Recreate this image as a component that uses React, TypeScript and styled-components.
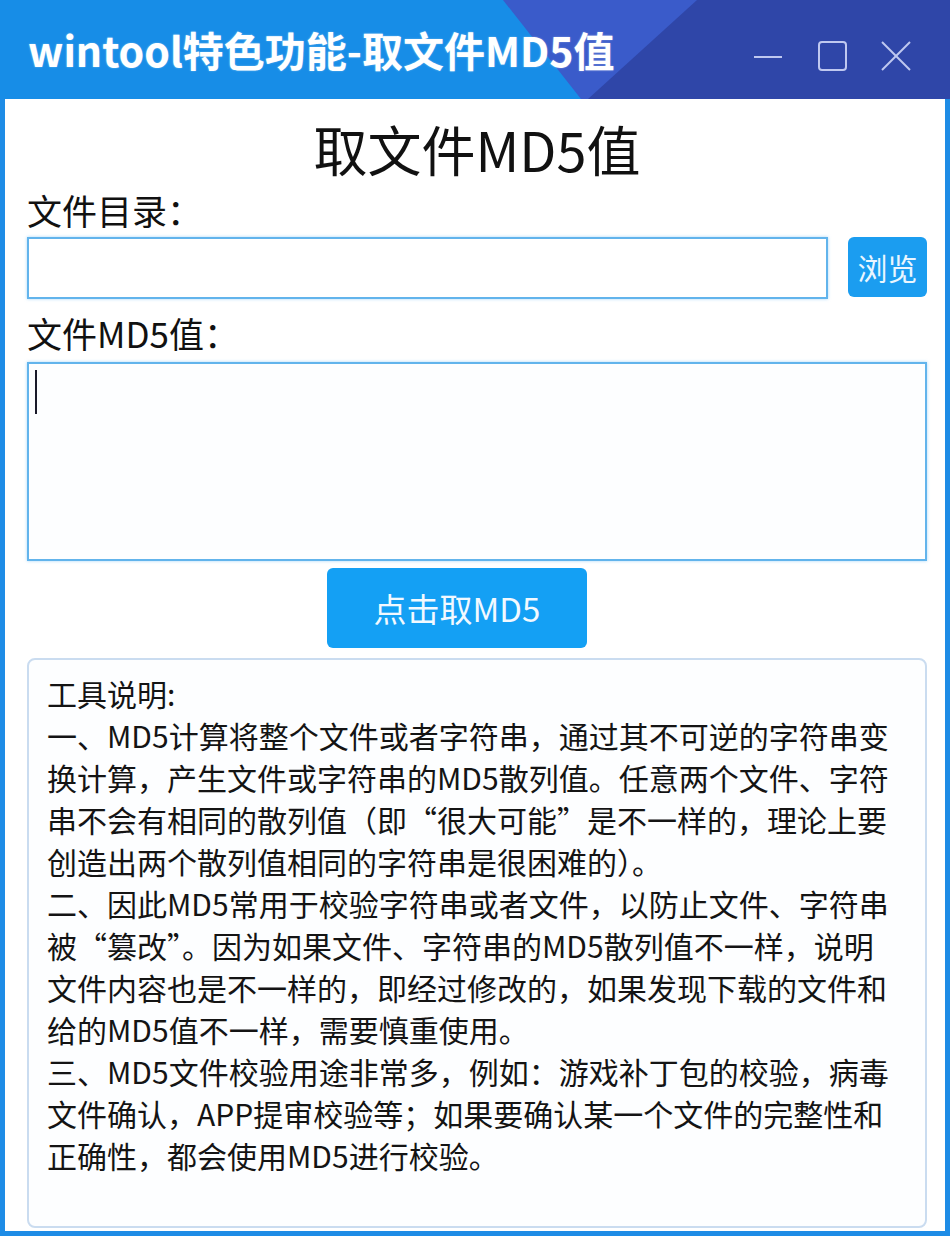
import React from "react";
import styled, { createGlobalStyle } from "styled-components";

const Global = createGlobalStyle`
  html, body { margin: 0; padding: 0; background: #ffffff; }
  body { font-family: "Noto Sans CJK SC", "Noto Sans", sans-serif; }
  * { box-sizing: border-box; }
`;

const FONT = `"Noto Sans CJK SC", "Noto Sans", sans-serif`;

const Window = styled.div`
  width: 950px;
  height: 1236px;
  display: flex;
  flex-direction: column;
  background: #1e8ce6;
  overflow: hidden;
`;

const TitleBar = styled.div`
  position: relative;
  height: 99px;
  flex: 0 0 auto;
  display: flex;
  align-items: center;
  justify-content: space-between;
  padding: 0 38px 0 28px;
  background: #178de7;
  &::before {
    content: "";
    position: absolute;
    inset: 0;
    background: #3a5bca;
    clip-path: polygon(503px 0, 100% 0, 100% 100%, 581px 100%);
  }
  &::after {
    content: "";
    position: absolute;
    inset: 0;
    background: #2f46a8;
    clip-path: polygon(697px 0, 100% 0, 100% 100%, 588px 100%);
  }
`;

const TitleText = styled.div`
  position: relative;
  z-index: 1;
  color: #ffffff;
  font-family: ${FONT};
  font-weight: 700;
  font-size: 41px;
  line-height: 1;
  margin-top: 0px;
  white-space: nowrap;
  text-shadow: 0 0 2px rgba(255, 255, 255, 0.4);
`;

const Controls = styled.div`
  position: relative;
  z-index: 1;
  display: flex;
  align-items: center;
  gap: 32px;
  margin-top: 12px;
`;

const ControlIcon = styled.svg`
  width: 32px;
  height: 32px;
  display: block;
  stroke: #bfc8f0;
  stroke-width: 2;
  fill: none;
`;

const Body = styled.div`
  flex: 1;
  margin: 0 5px 5px;
  background: #ffffff;
  display: flex;
  flex-direction: column;
  padding: 18px 18px 3px 22px;
`;

const Heading = styled.h1`
  margin: 0;
  text-align: center;
  font-family: ${FONT};
  font-weight: 400;
  font-size: 54px;
  line-height: 64px;
  color: #111111;
  padding-left: 0px;
`;

const Label = styled.div<{ $top: number }>`
  font-family: ${FONT};
  font-size: 35px;
  line-height: 40px;
  color: #111111;
  margin-top: ${(p) => p.$top}px;
  height: 40px;
`;

const InputRow = styled.div`
  display: flex;
  align-items: flex-start;
  gap: 20px;
  margin-top: 7px;
`;

const PathInput = styled.div`
  flex: 1;
  height: 62px;
  border: 2px solid #62b4ec;
  box-shadow: 0 0 3px rgba(110, 190, 245, 0.6);
  background: #ffffff;
`;

const BrowseButton = styled.button`
  width: 79px;
  height: 60px;
  border: none;
  border-radius: 6px;
  background: #1b9df0;
  color: #eaf6ff;
  font-family: ${FONT};
  font-size: 30px;
  line-height: 1;
  padding: 0;
  cursor: pointer;
`;

const OutputBox = styled.div`
  margin-top: 9px;
  height: 199px;
  border: 2px solid #62b4ec;
  box-shadow: 0 0 3px rgba(110, 190, 245, 0.6);
  background: #fdfeff;
  padding: 6px 0 0 6px;
`;

const Caret = styled.span`
  display: block;
  width: 2px;
  height: 44px;
  background: #1a1a2a;
`;

const ButtonRow = styled.div`
  display: flex;
  justify-content: center;
  margin-top: 7px;
  padding-right: 40px;
`;

const MainButton = styled.button`
  width: 260px;
  height: 80px;
  border: none;
  border-radius: 6px;
  background: #14a0f4;
  color: #f2f9ff;
  font-family: ${FONT};
  font-size: 33px;
  line-height: 1;
  padding: 0;
  cursor: pointer;
`;

const InfoBox = styled.div`
  margin-top: 10px;
  flex: 1;
  border: 2px solid #cadcf0;
  border-radius: 8px;
  background: #fdfeff;
  padding: 12px 0 0 18px;
`;

const InfoLine = styled.div`
  font-family: ${FONT};
  font-size: 30px;
  line-height: 42px;
  height: 42px;
  color: #141414;
  white-space: nowrap;
`;

const lines = [
  "工具说明:",
  "一、MD5计算将整个文件或者字符串，通过其不可逆的字符串变",
  "换计算，产生文件或字符串的MD5散列值。任意两个文件、字符",
  "串不会有相同的散列值（即“很大可能”是不一样的，理论上要",
  "创造出两个散列值相同的字符串是很困难的）。",
  "二、因此MD5常用于校验字符串或者文件，以防止文件、字符串",
  "被“篡改”。因为如果文件、字符串的MD5散列值不一样，说明",
  "文件内容也是不一样的，即经过修改的，如果发现下载的文件和",
  "给的MD5值不一样，需要慎重使用。",
  "三、MD5文件校验用途非常多，例如：游戏补丁包的校验，病毒",
  "文件确认，APP提审校验等；如果要确认某一个文件的完整性和",
  "正确性，都会使用MD5进行校验。",
];

export default function App() {
  return (
    <>
      <Global />
      <Window>
        <TitleBar>
          <TitleText>wintool特色功能-取文件MD5值</TitleText>
          <Controls>
            <ControlIcon viewBox="0 0 32 32">
              <line x1="2" y1="17" x2="30" y2="17" />
            </ControlIcon>
            <ControlIcon viewBox="0 0 32 32">
              <rect x="3" y="2" width="27" height="28" rx="3" />
            </ControlIcon>
            <ControlIcon viewBox="0 0 32 32">
              <line x1="2" y1="2" x2="30" y2="30" />
              <line x1="30" y1="2" x2="2" y2="30" />
            </ControlIcon>
          </Controls>
        </TitleBar>
        <Body>
          <Heading>取文件MD5值</Heading>
          <Label $top={9}>文件目录：</Label>
          <InputRow>
            <PathInput />
            <BrowseButton>浏览</BrowseButton>
          </InputRow>
          <Label $top={14}>文件MD5值：</Label>
          <OutputBox>
            <Caret />
          </OutputBox>
          <ButtonRow>
            <MainButton>点击取MD5</MainButton>
          </ButtonRow>
          <InfoBox>
            {lines.map((l, i) => (
              <InfoLine key={i}>{l}</InfoLine>
            ))}
          </InfoBox>
        </Body>
      </Window>
    </>
  );
}
